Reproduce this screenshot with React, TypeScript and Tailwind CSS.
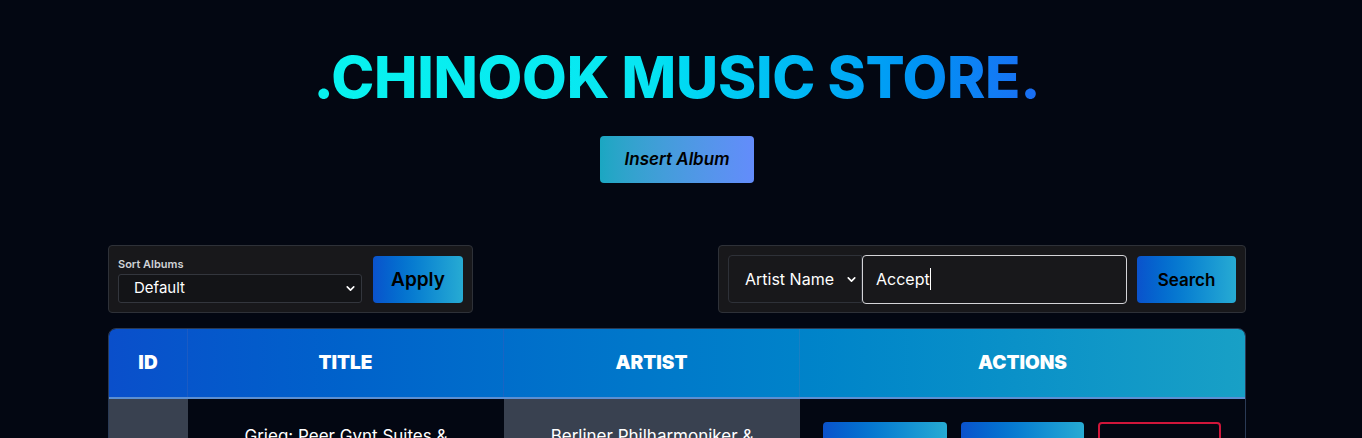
import { ChevronDown } from "lucide-react";

const font = { fontFamily: "Inter, 'Noto Sans', sans-serif" };

const gradBtn = "bg-gradient-to-r from-[#0b52cc] to-[#27abd3]";

export default function App() {
  return (
    <div className="min-h-[438px] overflow-hidden bg-[#030712] pr-[8px] text-white" style={font}>
      <header className="flex flex-col items-center pt-[44px]">
        <h1 className="bg-gradient-to-r from-[#08f3ef] via-[#08e6f2] via-45% to-[#1a6cf3] bg-clip-text text-[58px] font-extrabold leading-[66px] tracking-[-0.005em] text-transparent">
          .CHINOOK MUSIC STORE.
        </h1>
        <button className="mt-[26px] h-[47px] w-[154px] rounded bg-gradient-to-r from-[#1aa7c2] to-[#638cfb] text-[17px] font-semibold italic text-black">
          Insert Album
        </button>
      </header>

      <div className="mx-auto mt-[62px] w-[1138px]">
        <div className="flex items-start justify-between">
          <div className="flex h-[68px] w-[365px] items-center gap-[11px] rounded border border-[#2e3138] bg-[#18181b] px-[9px]">
            <div className="flex flex-1 flex-col pt-[1px]">
              <span className="text-[11px] font-semibold leading-[14px] text-[#cfd2d6]">Sort Albums</span>
              <div className="mt-[3px] flex h-[29px] items-center justify-between rounded-[3px] border border-[#33363d] bg-[#131417] pl-[15px] pr-[4px]">
                <span className="text-[15px] text-white">Default</span>
                <ChevronDown size={13} strokeWidth={3} className="text-white" />
              </div>
            </div>
            <button className={`h-[47px] w-[90px] rounded ${gradBtn} pt-[3px] text-[19px] font-semibold text-black`}>
              Apply
            </button>
          </div>

          <div className="flex h-[68px] w-[528px] items-center rounded border border-[#2e3138] bg-[#18181b] px-[9px]">
            <div className="flex h-[48px] w-[134px] items-center justify-between rounded-l border border-[#2e3138] bg-[#18181b] pl-[16px] pr-[3px]">
              <span className="text-[16px] text-white">Artist Name</span>
              <ChevronDown size={13} strokeWidth={3} className="text-white" />
            </div>
            <div className="flex h-[49px] w-[265px] items-center rounded border border-[#d4d4d8] bg-[#18181b] pl-[13px]">
              <span className="text-[16px] text-white">Accept</span>
              <span className="h-[22px] w-px bg-white" />
            </div>
            <button className={`ml-[10px] h-[47px] w-[99px] rounded ${gradBtn} pt-[3px] text-[17px] font-semibold text-black`}>
              Search
            </button>
          </div>
        </div>

        <div className="mt-[15px] overflow-hidden rounded-t-lg border border-[#2a3a55]">
          <div className="grid h-[70px] grid-cols-[79px_316px_296px_1fr] border-b-2 border-[#5b8fd3] bg-gradient-to-r from-[#0a4fcb] to-[#18a0c6] text-[19px] font-black">
            <div className="flex items-center justify-center border-r border-[#2a5fc0]/60">ID</div>
            <div className="flex items-center justify-center border-r border-[#2a5fc0]/60">TITLE</div>
            <div className="flex items-center justify-center border-r border-[#2a7fc0]/60">ARTIST</div>
            <div className="flex items-center justify-center">ACTIONS</div>
          </div>
          <div className="grid h-[60px] grid-cols-[79px_316px_296px_1fr] text-[17px]">
            <div className="bg-[#394150]" />
            <div className="flex justify-center bg-[#030712] pt-[25px]">Grieg: Peer Gynt Suites &amp;</div>
            <div className="flex justify-center bg-[#394150] pt-[25px]">Berliner Philharmoniker &amp;</div>
            <div className="flex gap-[14px] bg-[#030712] pl-[23px] pt-[23px]">
              <div className={`h-[40px] w-[124px] rounded ${gradBtn}`} />
              <div className={`h-[40px] w-[123px] rounded ${gradBtn}`} />
              <div className="h-[40px] w-[123px] rounded border-2 border-[#d0163a]" />
            </div>
          </div>
        </div>
      </div>
    </div>
  );
}
